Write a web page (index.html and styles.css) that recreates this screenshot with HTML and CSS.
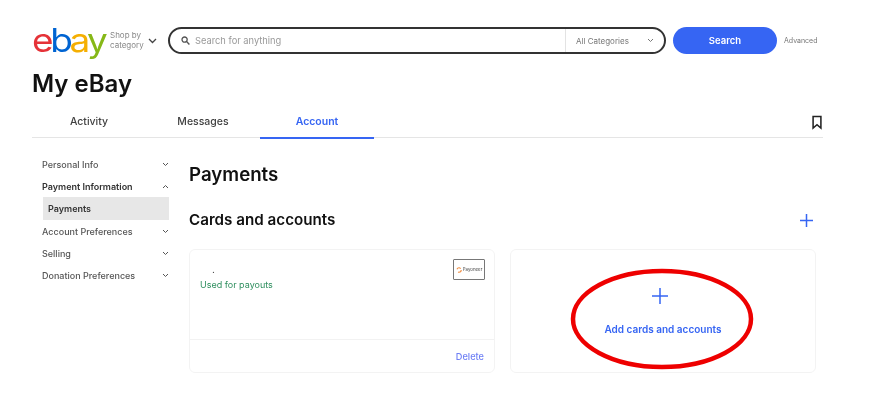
FILE: index.html
```html
<!DOCTYPE html>
<html lang="en">
<head>
<meta charset="utf-8">
<title>My eBay - Payments</title>
<link rel="stylesheet" href="styles.css">
</head>
<body>
<div class="page">
  <header class="topbar">
    <a class="logo"><span class="l-e">e</span><span class="l-b">b</span><span class="l-a">a</span><span class="l-y">y</span></a>
    <div class="shop"><span>Shop by<br>category</span>
      <svg class="shop-chev" width="9" height="6" viewBox="0 0 9 6"><path d="M1 1l3.5 3.5L8 1" fill="none" stroke="#444" stroke-width="1.3"/></svg>
    </div>
    <div class="searchbox">
      <svg class="mag" width="9" height="9" viewBox="0 0 9 9"><circle cx="3.6" cy="3.6" r="2.6" fill="none" stroke="#555" stroke-width="1.3"/><path d="M5.6 5.6L8.4 8.4" stroke="#555" stroke-width="1.4"/></svg>
      <span class="placeholder">Search for anything</span>
      <div class="cat"><span>All Categories</span>
        <svg width="7" height="5" viewBox="0 0 7 5"><path d="M1 1l2.5 2.5L6 1" fill="none" stroke="#777" stroke-width="1"/></svg>
      </div>
    </div>
    <button class="searchbtn">Search</button>
    <span class="advanced">Advanced</span>
  </header>

  <h1 class="title">My eBay</h1>

  <nav class="tabs">
    <a class="tab">Activity</a>
    <a class="tab">Messages</a>
    <a class="tab active">Account</a>
    <svg class="bookmark" width="10" height="15" viewBox="0 0 11 15"><path d="M1.2 1h8.6v12.6L5.5 10l-4.3 3.6z" fill="none" stroke="#222" stroke-width="1.7"/></svg>
  </nav>

  <div class="content">
    <aside class="side">
      <div class="side-item"><span>Personal Info</span><svg class="chev" width="7" height="5" viewBox="0 0 7 5"><path d="M1 1l2.5 2.5L6 1"/></svg></div>
      <div class="side-item strong"><span>Payment Information</span><svg class="chev" width="7" height="5" viewBox="0 0 7 5"><path d="M1 4l2.5-2.5L6 4"/></svg></div>
      <div class="side-sub">Payments</div>
      <div class="side-item"><span>Account Preferences</span><svg class="chev" width="7" height="5" viewBox="0 0 7 5"><path d="M1 1l2.5 2.5L6 1"/></svg></div>
      <div class="side-item"><span>Selling</span><svg class="chev" width="7" height="5" viewBox="0 0 7 5"><path d="M1 1l2.5 2.5L6 1"/></svg></div>
      <div class="side-item"><span>Donation Preferences</span><svg class="chev" width="7" height="5" viewBox="0 0 7 5"><path d="M1 1l2.5 2.5L6 1"/></svg></div>
    </aside>

    <main class="main">
      <h2 class="h-pay">Payments</h2>
      <div class="section-head">
        <h3 class="h-cards">Cards and accounts</h3>
        <svg class="plus" width="13" height="13" viewBox="0 0 13 13"><path d="M6.5 0v13M0 6.5h13" stroke="#3665f3" stroke-width="1.5"/></svg>
      </div>
      <div class="cards">
        <section class="card">
          <div class="card-body">
            <div class="card-text">
              <div class="dot-line">.</div>
              <div class="used">Used for payouts</div>
            </div>
            <div class="brand"><svg width="6" height="6" viewBox="0 0 6 6"><circle cx="3" cy="3" r="2.2" fill="none" stroke="#f08a3c" stroke-width="1.1" stroke-dasharray="4 3"/></svg><span>Payoneer</span></div>
          </div>
          <div class="card-foot"><a class="delete">Delete</a></div>
        </section>
        <section class="card add">
          <svg class="add-plus" width="16" height="16" viewBox="0 0 16 16"><path d="M8 0v16M0 8h16" stroke="#3665f3" stroke-width="1.5"/></svg>
          <div class="add-label">Add cards and accounts</div>
          <svg class="ring" width="186" height="104" viewBox="0 0 186 104"><ellipse cx="93" cy="52" rx="89" ry="48" fill="none" stroke="#ee0000" stroke-width="4.5"/></svg>
        </section>
      </div>
    </main>
  </div>
</div>
</body>
</html>
```
FILE: styles.css
```css
* { box-sizing: border-box; }
html, body { margin: 0; padding: 0; background: #fff; }
body { font-family: Inter, "Liberation Sans", sans-serif; color: #191919; overflow: hidden; }
.page { width: 873px; height: 410px; padding: 27px 50px 0 32px; filter: blur(0.4px); }

.topbar { display: flex; align-items: center; height: 27px; }
.logo { display: flex; width: 72px; font-family: Inter, sans-serif; font-size: 33px; font-weight: 400; line-height: 27px; letter-spacing: -3px; transform: scaleX(1.12); transform-origin: left center; }
.l-e { color: #e53238; }
.l-b { color: #0064d2; }
.l-a { color: #f5af02; }
.l-y { color: #86b817; }
.shop { display: flex; align-items: center; margin-left: 6px; width: 58px; gap: 4px; padding-bottom: 2px; font-size: 8px; line-height: 10px; color: #888; }
.shop-chev { flex: none; margin-top: 2px; }
.searchbox { display: flex; align-items: center; width: 498px; height: 27px; border: 2px solid #333; border-radius: 14px; padding-left: 11px; }
.mag { flex: none; }
.placeholder { margin-left: 5px; flex: 1; font-size: 9.3px; color: #999; }
.cat { display: flex; align-items: center; justify-content: space-between; width: 99px; height: 100%; padding: 0 10px; border-left: 1px solid #e3e3e3; font-size: 8px; color: #767676; }
.searchbtn { width: 104px; height: 27px; margin-left: 7px; border: 0; border-radius: 14px; background: #3665f3; color: #fff; font: 600 9.5px Inter, sans-serif; }
.advanced { margin-left: 7px; font-size: 7px; color: #767676; }

.title { margin: 15px 0 0; font-size: 24px; line-height: 29px; font-weight: 600; color: #111; }

.tabs { display: flex; align-items: stretch; height: 36px; margin-top: 4px; border-bottom: 1.5px solid #e5e5e5; position: relative; }
.tab { display: flex; align-items: center; justify-content: center; width: 114px; padding-top: 3px; font-size: 10.5px; font-weight: 500; color: #414141; }
.tab.active { color: #3665f3; font-weight: 600; padding-top: 5px; border-bottom: 2px solid #3665f3; margin-bottom: -1.5px; }
.bookmark { margin: 13px 1px 0 auto; }

.content { display: flex; margin-top: 14px; }
.side { width: 127px; margin-left: 10px; padding-top: 1px; flex: none; }
.side-item { display: flex; align-items: center; justify-content: space-between; height: 22px; font-size: 9px; font-weight: 500; color: #555; }
.side-item.strong { color: #333; font-weight: 600; }
.chev { flex: none; fill: none; stroke: #555; stroke-width: 1; }
.side-sub { display: flex; align-items: center; width: 126px; height: 23px; margin-left: 1px; padding-left: 5px; background: #e7e7e7; font-size: 9px; font-weight: 600; color: #333; }

.main { margin-left: 20px; width: 626px; flex: none; }
.h-pay { margin: 10px 0 0; font-size: 18.7px; line-height: 26px; font-weight: 600; color: #111; }
.section-head { display: flex; align-items: center; justify-content: space-between; height: 26px; margin-top: 18px; padding-right: 2px; }
.plus { margin-top: 2px; }
.h-cards { margin: 0; font-size: 15.2px; font-weight: 600; color: #111; }
.cards { display: grid; grid-template-columns: 306px 306px; gap: 15px; margin-top: 17px; }
.card { height: 124px; border: 1px solid #f3f3f3; border-radius: 6px; display: flex; flex-direction: column; }
.card-body { flex: 1; display: flex; justify-content: space-between; padding: 9px 9px 0 10px; }
.dot-line { height: 17px; margin: 3px 0 0 12px; font-size: 10px; line-height: 14px; color: #333; }
.used { font-size: 9px; line-height: 12px; color: #2f8f5f; }
.brand { display: flex; align-items: center; justify-content: center; gap: 1px; width: 32px; height: 21px; border: 1.4px solid #777; border-radius: 1px; font-size: 4.4px; color: #444; }
.card-foot { display: flex; align-items: center; justify-content: flex-end; height: 33px; padding-right: 10px; border-top: 1px solid #f2f2f2; }
.delete { font-size: 9.2px; font-weight: 500; color: #6f80f5; }
.add { position: relative; align-items: center; }
.add-plus { margin-top: 38px; margin-right: 6px; }
.add-label { margin-top: 19px; font-size: 10px; font-weight: 600; color: #3665f3; }
.ring { position: absolute; left: 58px; top: 17px; }
```
